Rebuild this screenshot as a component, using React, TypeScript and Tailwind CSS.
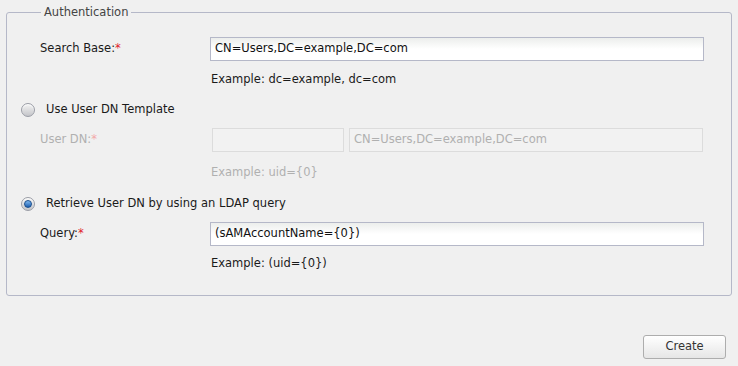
import React from "react";

const font = { fontFamily: '"DejaVu Sans", "Noto Sans", sans-serif' };

function Radio({ checked }: { checked?: boolean }) {
  return (
    <span className="relative inline-block h-[14px] w-[14px] shrink-0 rounded-full border border-[#9a9da6] bg-gradient-to-b from-[#f4f4f4] to-[#c4c5c9] shadow-[inset_0_1px_1px_rgba(255,255,255,0.9)]">
      {checked && (
        <span className="absolute left-[2px] top-[2px] h-[8px] w-[8px] rounded-full bg-gradient-to-b from-[#7fb8ef] to-[#1a5fb0] border border-[#1b4f8e]" />
      )}
    </span>
  );
}

function Req({ disabled }: { disabled?: boolean }) {
  return <span className={disabled ? "text-[#f3a9a9]" : "text-[#e0202a]"}>*</span>;
}

function Input({ value, className, disabled }: { value?: string; className?: string; disabled?: boolean }) {
  return (
    <div
      className={
        "flex h-[24px] items-center px-[4px] " +
        (disabled
          ? "border border-[#dcdcdc] bg-[#f2f2f2] text-[#b0b0b0] "
          : "border border-[#b5b8c8] bg-gradient-to-b from-[#eceeec] via-white to-white text-[#111] ") +
        (className ?? "")
      }
    >
      {value}
    </div>
  );
}

export default function App() {
  return (
    <div className="h-[366px] w-[738px] bg-[#f0f0f0] text-[11.5px] text-[#1a1a1a]" style={font}>
      <div className="pl-[6px] pr-[6px] pt-[2px]">
        <fieldset className="rounded-[3px] border border-[#b5b8c8] pb-[24px]">
          <legend className="ml-[34px] px-[3px] leading-[20px] text-[#444]">Authentication</legend>
          <div className="pl-[33px]">
            <div className="mt-[15px] flex items-center">
              <div className="w-[170px]">
                Search Base:<Req />
              </div>
              <Input className="w-[494px]" value="CN=Users,DC=example,DC=com" />
            </div>
            <div className="mt-[10px] h-[16px] pl-[171px] leading-[16px]">Example: dc=example, dc=com</div>

            <div className="-ml-[19px] mt-[15px] flex h-[16px] items-center gap-[11px]">
              <Radio />
              <span>Use User DN Template</span>
            </div>
            <div className="mt-[10px] flex items-center">
              <div className="w-[172px] text-[#b0b0b0]">
                User DN:<Req disabled />
              </div>
              <Input className="w-[132px]" disabled />
              <Input className="ml-[5px] w-[354px]" disabled value="CN=Users,DC=example,DC=com" />
            </div>
            <div className="mt-[12px] h-[16px] pl-[171px] leading-[16px] text-[#b0b0b0]">Example: uid={"{0}"}</div>

            <div className="-ml-[19px] mt-[16px] flex h-[16px] items-center gap-[11px]">
              <Radio checked />
              <span>Retrieve User DN by using an LDAP query</span>
            </div>
            <div className="mt-[10px] flex items-center">
              <div className="w-[170px]">
                Query:<Req />
              </div>
              <Input className="w-[494px]" value="(sAMAccountName={0})" />
            </div>
            <div className="mt-[9px] h-[16px] pl-[171px] leading-[16px]">Example: (uid={"{0}"})</div>
          </div>
        </fieldset>
      </div>
      <div className="mt-[39px] flex justify-end pr-[12px]">
        <button className="h-[24px] w-[83px] rounded-[3px] border border-[#adadad] bg-gradient-to-b from-white to-[#e6e6e6] text-[#333]">
          Create
        </button>
      </div>
    </div>
  );
}
